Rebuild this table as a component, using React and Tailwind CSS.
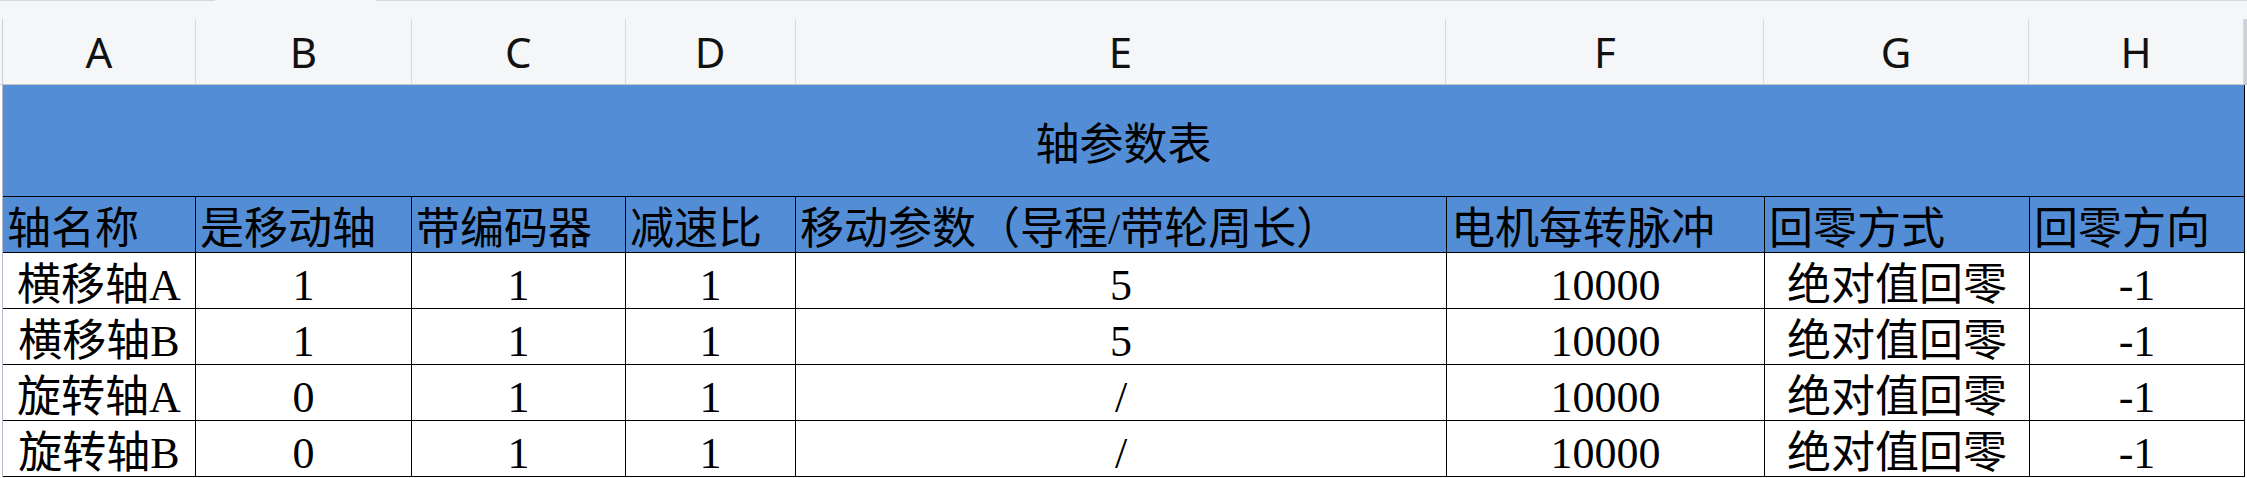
import React from 'react';

const cols = [
    { key: 'A', w: 'w-[193px]' },
    { key: 'B', w: 'w-[216px]' },
    { key: 'C', w: 'w-[214px]' },
    { key: 'D', w: 'w-[170px]' },
    { key: 'E', w: 'w-[651px]' },
    { key: 'F', w: 'w-[318px]' },
    { key: 'G', w: 'w-[265px]' },
    { key: 'H', w: 'w-[215px]' },
];

const heads = ['轴名称', '是移动轴', '带编码器', '减速比', '移动参数（导程/带轮周长）', '电机每转脉冲', '回零方式', '回零方向'];

const rows = [
    ['横移轴A', '1', '1', '1', '5', '10000', '绝对值回零', '-1'],
    ['横移轴B', '1', '1', '1', '5', '10000', '绝对值回零', '-1'],
    ['旋转轴A', '0', '1', '1', '/', '10000', '绝对值回零', '-1'],
    ['旋转轴B', '0', '1', '1', '/', '10000', '绝对值回零', '-1'],
];

const cellFont = "font-['Liberation_Serif','Noto_Sans_CJK_SC',serif] text-[44px] leading-none text-black";

const App = () => {
    return (
        <div className="w-[2247px] h-[478px] bg-white overflow-hidden">
            {/* toolbar edge */}
            <div className="flex h-[19px] bg-[#f5f6f8]">
                <div className="w-[215px] h-px bg-[#d5d8df]" />
                <div className="w-[161px] h-px" />
                <div className="flex-1 h-px bg-[#d5d8df]" />
            </div>

            {/* column letters */}
            <div className="flex h-[66px] bg-[#f5f6f8] border-b border-[#c4c7cd]">
                <div className="w-[3px] border-r border-[#c9cedb]" />
                {cols.map((c) => (
                    <div
                        key={c.key}
                        className={`${c.w} flex items-center justify-center border-r border-[#d6d9e2] font-['Noto_Sans',sans-serif] text-[42px] text-[#111]`}
                    >
                        {c.key}
                    </div>
                ))}
                <div className="w-[3px] bg-[#cdd0d8]" />
            </div>

            <div className="flex">
                <div className="w-[3px] border-r border-[#b3bccd]" />
                <div className="w-[2242px]">
                    {/* title */}
                    <div className={`h-[112px] flex items-center justify-center bg-[#538dd5] border-b border-r border-black ${cellFont}`}>
                        <span className="pt-[10px]">轴参数表</span>
                    </div>

                    {/* field names */}
                    <div className="flex h-[56px] bg-[#538dd5] border-b border-black">
                        {heads.map((h, i) => (
                            <div
                                key={h}
                                className={`${cols[i].w} flex items-center pl-[4px] pt-[10px] border-r border-black whitespace-nowrap ${cellFont}`}
                            >
                                {h}
                            </div>
                        ))}
                    </div>

                    {/* data */}
                    {rows.map((r, ri) => (
                        <div key={ri} className="flex h-[56px] border-b border-black">
                            {r.map((v, i) => (
                                <div
                                    key={i}
                                    className={`${cols[i].w} flex items-center justify-center pt-[10px] border-r border-black whitespace-nowrap ${cellFont}`}
                                >
                                    {v}
                                </div>
                            ))}
                        </div>
                    ))}
                </div>
            </div>
        </div>
    );
};

export default App;
